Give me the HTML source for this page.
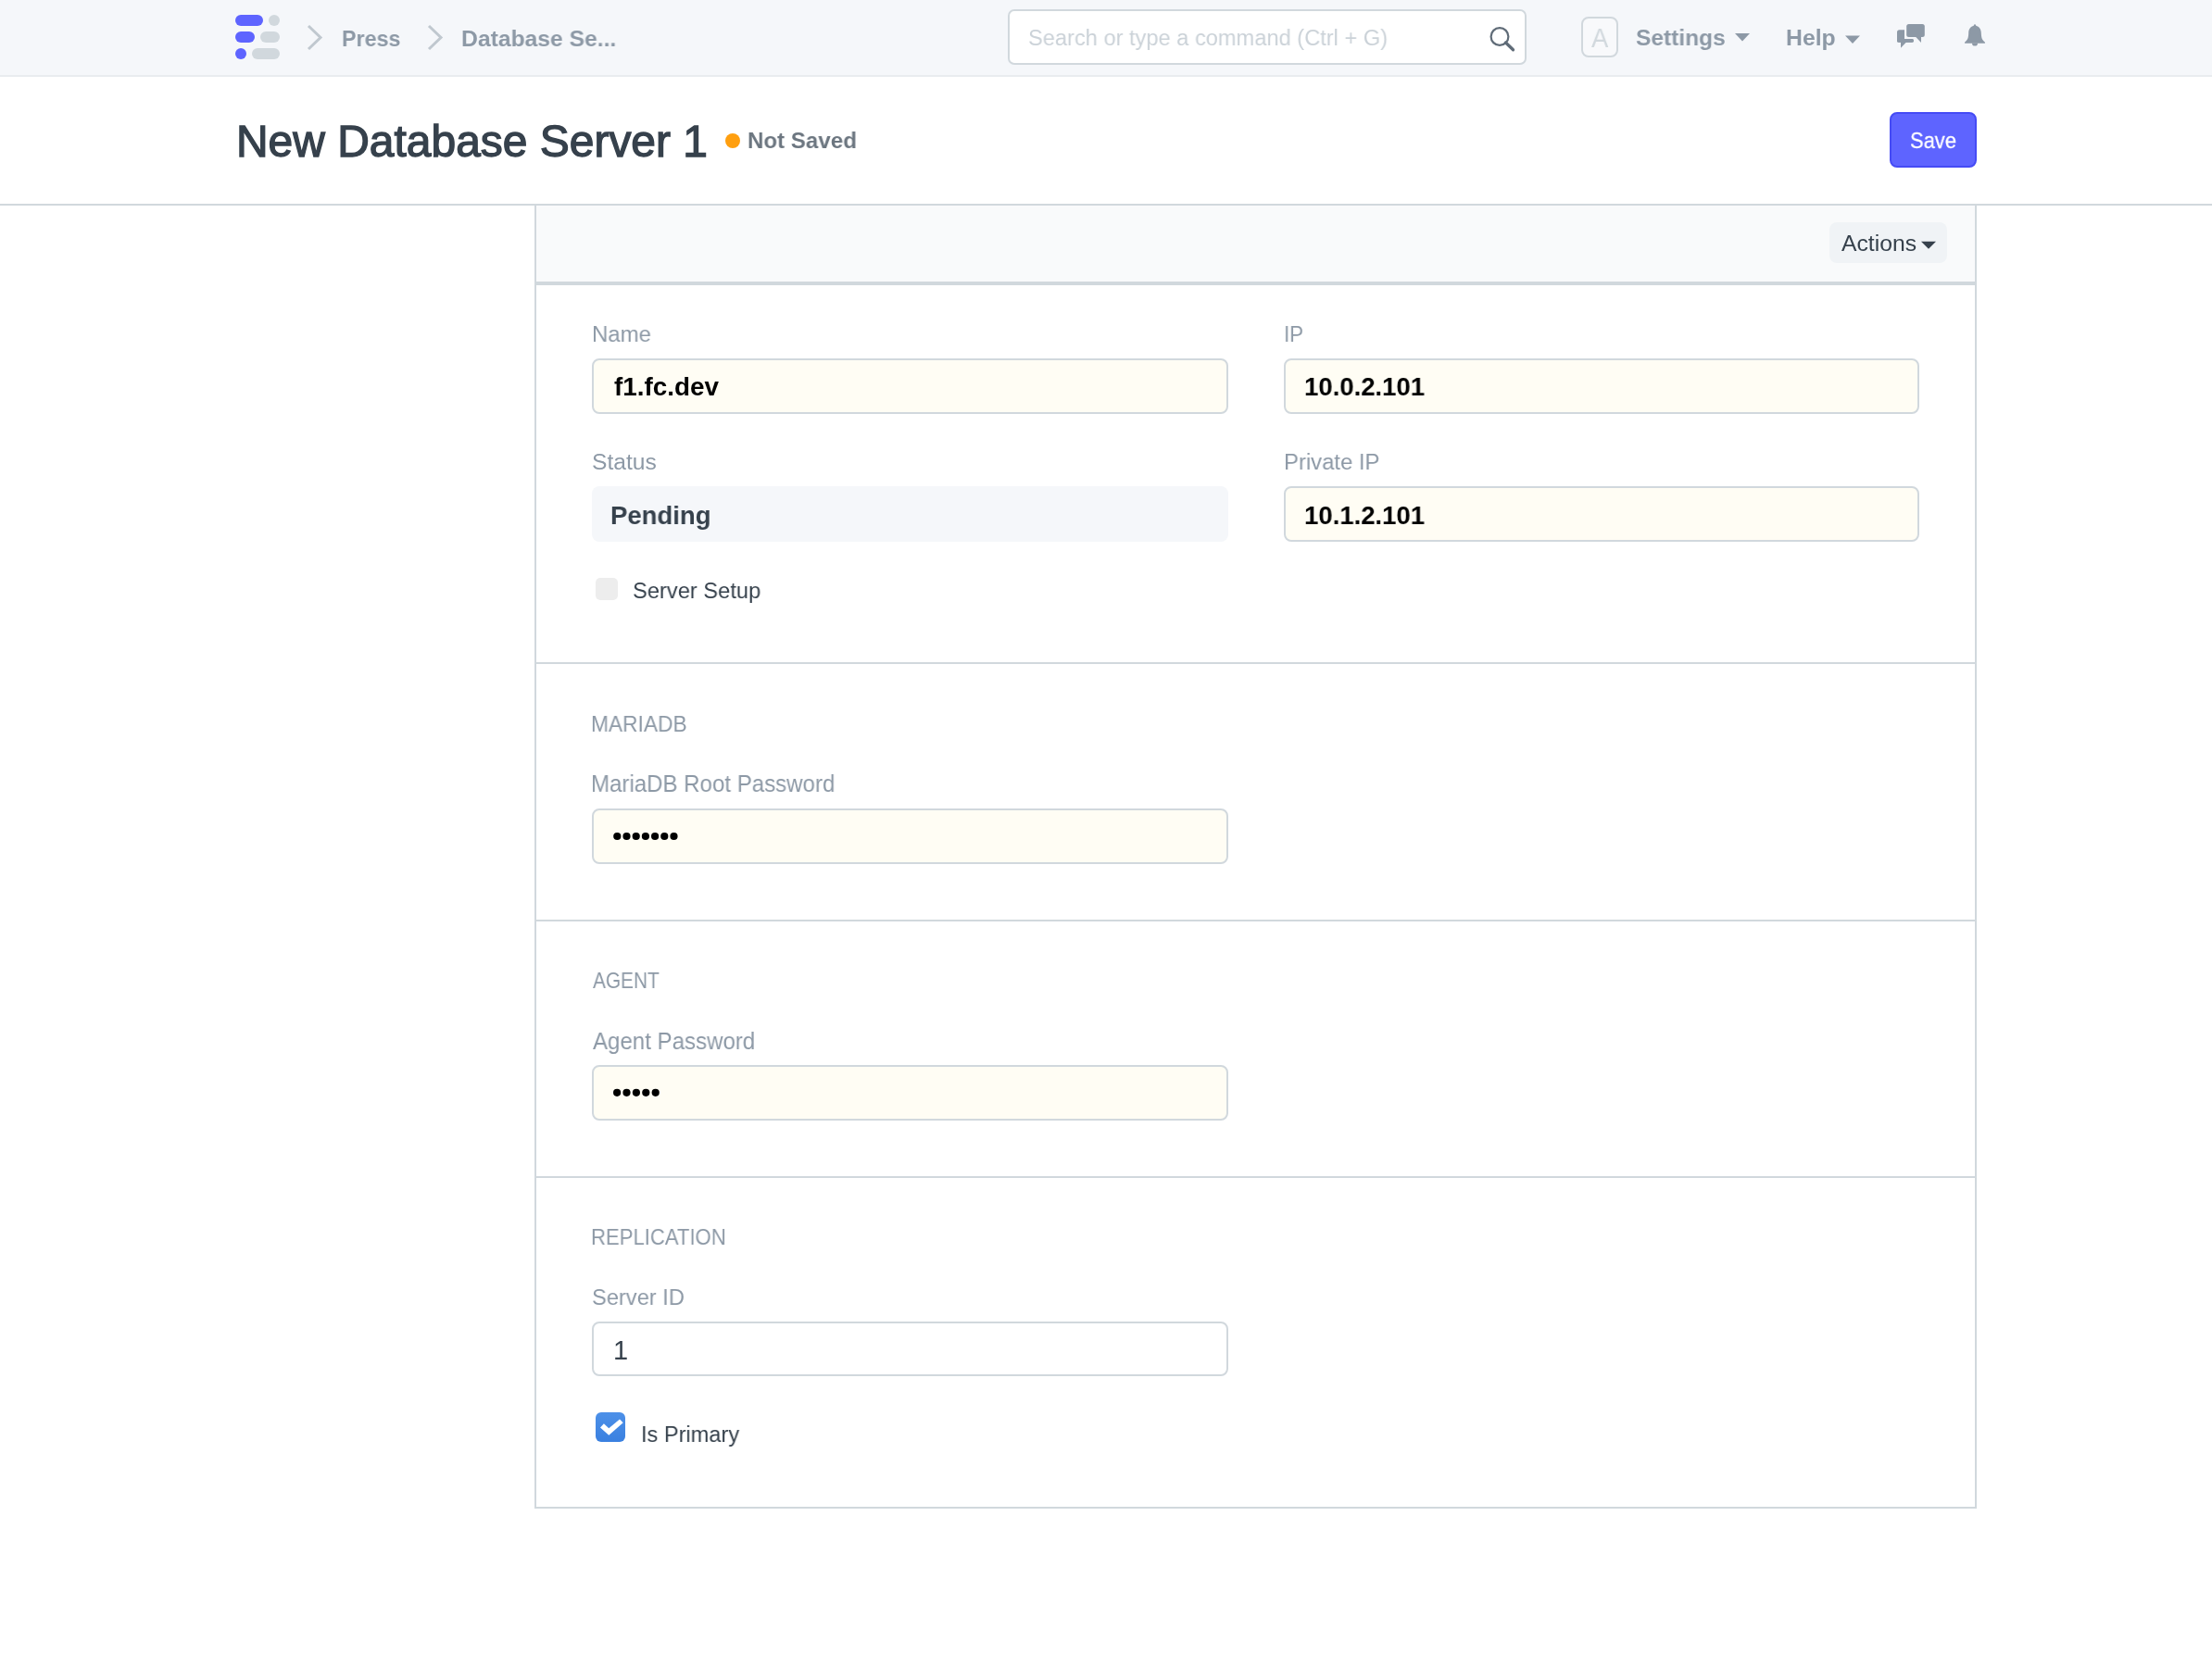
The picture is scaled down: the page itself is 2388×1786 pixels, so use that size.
<!DOCTYPE html>
<html><head><meta charset="utf-8"><title>New Database Server 1</title>
<style>
html,body{margin:0;padding:0;}
body{width:2388px;height:1786px;background:#ffffff;overflow:hidden;position:relative;font-family:'Liberation Sans', sans-serif;}
.a{position:absolute;box-sizing:border-box;}
.t{position:absolute;white-space:nowrap;transform-origin:0 0;font-family:'Liberation Sans', sans-serif;will-change:transform;}
svg{position:absolute;left:0;top:0;overflow:visible;}
</style></head>
<body>
<div class="a" style="left:0px;top:0px;width:2388px;height:81px;background:#f5f7fa;"></div>
<div class="a" style="left:0px;top:81px;width:2388px;height:2px;background:#e9ecef;"></div>
<div class="a" style="left:254px;top:16px;width:30px;height:12px;background:#5e64ff;border-radius:6px;"></div>
<div class="a" style="left:254px;top:34px;width:21px;height:12px;background:#5e64ff;border-radius:6px;"></div>
<div class="a" style="left:254px;top:52px;width:12px;height:12px;background:#5e64ff;border-radius:6px;"></div>
<div class="a" style="left:290px;top:16px;width:12px;height:12px;background:#d1d8dd;border-radius:6px;"></div>
<div class="a" style="left:281px;top:34px;width:21px;height:12px;background:#d1d8dd;border-radius:6px;"></div>
<div class="a" style="left:272px;top:52px;width:30px;height:12px;background:#d1d8dd;border-radius:6px;"></div>
<div class="a" style="left:1088px;top:10px;width:560px;height:60px;background:#ffffff;border:2px solid #d1d8dd;border-radius:7px;"></div>
<div class="a" style="left:1707px;top:18px;width:40px;height:44px;background:#f8f9fb;border:2px solid #d1d8dd;border-radius:8px;"></div>
<div class="a" style="left:0px;top:220px;width:2388px;height:2px;background:#d1d8dd;"></div>
<div class="a" style="left:2040px;top:121px;width:94px;height:60px;background:#5e64ff;border:2px solid #454bf5;border-radius:8px;"></div>
<div class="a" style="left:577px;top:222px;width:1557px;height:1407px;border:2px solid #d1d8dd;border-top:none;background:#ffffff;"></div>
<div class="a" style="left:579px;top:222px;width:1553px;height:82px;background:#f9fafb;"></div>
<div class="a" style="left:579px;top:304px;width:1553px;height:4px;background:#d1d8dd;"></div>
<div class="a" style="left:1975px;top:240px;width:127px;height:44px;background:#f0f3f6;border-radius:8px;"></div>
<div class="a" style="left:639px;top:387px;width:687px;height:60px;background:#fffdf4;border-radius:8px;border:2px solid #d1d8dd;"></div>
<div class="a" style="left:1386px;top:387px;width:686px;height:60px;background:#fffdf4;border-radius:8px;border:2px solid #d1d8dd;"></div>
<div class="a" style="left:639px;top:525px;width:687px;height:60px;background:#f5f7fa;border-radius:8px;"></div>
<div class="a" style="left:1386px;top:525px;width:686px;height:60px;background:#fffdf4;border-radius:8px;border:2px solid #d1d8dd;"></div>
<div class="a" style="left:639px;top:873px;width:687px;height:60px;background:#fffdf4;border-radius:8px;border:2px solid #d1d8dd;"></div>
<div class="a" style="left:639px;top:1150px;width:687px;height:60px;background:#fffdf4;border-radius:8px;border:2px solid #d1d8dd;"></div>
<div class="a" style="left:639px;top:1427px;width:687px;height:59px;background:#ffffff;border-radius:8px;border:2px solid #d1d8dd;"></div>
<div class="a" style="left:643px;top:624px;width:24px;height:24px;background:#ededed;border-radius:5px;"></div>
<div class="a" style="left:643px;top:1525px;width:32px;height:32px;background:linear-gradient(#4d90e8,#3a80e0);border-radius:6px;"></div>
<div class="a" style="left:579px;top:715px;width:1553px;height:2px;background:#d1d8dd;"></div>
<div class="a" style="left:579px;top:993px;width:1553px;height:2px;background:#d1d8dd;"></div>
<div class="a" style="left:579px;top:1270px;width:1553px;height:2px;background:#d1d8dd;"></div>
<svg width="2388" height="1786" viewBox="0 0 2388 1786"><polyline points="333,28 346,40.5 333,53" fill="none" stroke="#c0c8cf" stroke-width="3"/><polyline points="463,28 476,40.5 463,53" fill="none" stroke="#c0c8cf" stroke-width="3"/><circle cx="1619" cy="39.5" r="9.4" fill="none" stroke="#5f6b77" stroke-width="2.2"/><line x1="1625.5" y1="46" x2="1633.5" y2="53.8" stroke="#5f6b77" stroke-width="3.3" stroke-linecap="round"/><polygon points="1873,36 1889,36 1881,44.5" fill="#8d99a6"/><polygon points="1992,38.6 2008,38.6 2000,47" fill="#8d99a6"/><polygon points="2074,260.8 2090,260.8 2082,268.8" fill="#36414c"/><rect x="2058.2" y="26" width="19.6" height="14" rx="2.5" fill="#8d99a6"/><polygon points="2067.8,39.5 2074,39.5 2074,46" fill="#8d99a6"/><path d="M2050.5,32.2 H2056 V42.1 H2063.5 A2.4,2.4 0 0 1 2065.9,44.5 V43.4 A2.4,2.4 0 0 1 2063.5,45.8 H2050.5 A2.5,2.5 0 0 1 2048,43.3 V34.7 A2.5,2.5 0 0 1 2050.5,32.2 Z" fill="#8d99a6"/><rect x="2048" y="42.1" width="17.9" height="3.7" rx="1.5" fill="#8d99a6"/><polygon points="2052,45 2052,51.8 2058.5,45" fill="#8d99a6"/><path d="M2132,26.2 C2131,26.2 2130.8,27 2130.8,27.8 C2127.3,28.6 2125.3,31.5 2125.2,35.5 C2125,40.5 2124.5,43 2121.2,45.5 C2120.6,46 2121,46.8 2121.8,46.8 H2142.2 C2143,46.8 2143.4,46 2142.8,45.5 C2139.5,43 2139,40.5 2138.8,35.5 C2138.7,31.5 2136.7,28.6 2133.2,27.8 C2133.2,27 2133,26.2 2132,26.2 Z" fill="#8d99a6"/><path d="M2129,46.4 A3,3.2 0 0 0 2135,46.4 Z" fill="#8d99a6"/><circle cx="791" cy="152" r="8" fill="#ff9f0f"/><circle cx="666.3" cy="903" r="4.1" fill="#000"/><circle cx="676.5" cy="903" r="4.1" fill="#000"/><circle cx="686.7" cy="903" r="4.1" fill="#000"/><circle cx="696.9" cy="903" r="4.1" fill="#000"/><circle cx="707.1" cy="903" r="4.1" fill="#000"/><circle cx="717.3" cy="903" r="4.1" fill="#000"/><circle cx="727.5" cy="903" r="4.1" fill="#000"/><circle cx="666.1" cy="1179.8" r="4.1" fill="#000"/><circle cx="676.5" cy="1179.8" r="4.1" fill="#000"/><circle cx="686.9" cy="1179.8" r="4.1" fill="#000"/><circle cx="697.3" cy="1179.8" r="4.1" fill="#000"/><circle cx="707.7" cy="1179.8" r="4.1" fill="#000"/><polygon points="648,1541.4 657.3,1549.7 672.7,1536.2 669,1532.5 657.3,1542.2 651.9,1537.3" fill="#ffffff"/></svg>
<div class="t" style="left:368.62px;top:29.93px;font-size:24.78px;line-height:24.78px;font-weight:700;color:#8d99a6;transform:scaleX(0.9385);">Press</div>
<div class="t" style="left:498.01px;top:29.93px;font-size:24.78px;line-height:24.78px;font-weight:700;color:#8d99a6;transform:scaleX(0.9963);">Database Se...</div>
<div class="t" style="left:1109.73px;top:29.00px;font-size:24.35px;line-height:24.35px;font-weight:400;color:#cbd2d8;transform:scaleX(0.9706);">Search or type a command (Ctrl + G)</div>
<div class="t" style="left:1718.00px;top:27.36px;font-size:28.99px;line-height:28.99px;font-weight:400;color:#d1d8dd;transform:scaleX(0.9474);">A</div>
<div class="t" style="left:1766.01px;top:28.93px;font-size:24.78px;line-height:24.78px;font-weight:700;color:#8d99a6;transform:scaleX(0.9896);">Settings</div>
<div class="t" style="left:1928.00px;top:28.93px;font-size:24.78px;line-height:24.78px;font-weight:700;color:#8d99a6;">Help</div>
<div class="t" style="left:254.96px;top:129.07px;font-size:47.39px;line-height:47.39px;font-weight:400;color:#36414c;transform:scaleX(1.0120);-webkit-text-stroke:1.3px #36414c;">New Database Server 1</div>
<div class="t" style="left:806.84px;top:139.86px;font-size:24.64px;line-height:24.64px;font-weight:700;color:#6c7680;transform:scaleX(0.9786);">Not Saved</div>
<div class="t" style="left:2062.09px;top:140.28px;font-size:24.20px;line-height:24.20px;font-weight:400;color:#ffffff;transform:scaleX(0.9057);-webkit-text-stroke:0.3px #ffffff;">Save</div>
<div class="t" style="left:1987.50px;top:250.86px;font-size:24.64px;line-height:24.64px;font-weight:400;color:#36414c;transform:scaleX(1.0038);">Actions</div>
<div class="t" style="left:638.95px;top:349.06px;font-size:24.64px;line-height:24.64px;font-weight:400;color:#8d99a6;transform:scaleX(0.9730);">Name</div>
<div class="t" style="left:1385.98px;top:349.06px;font-size:24.64px;line-height:24.64px;font-weight:400;color:#8d99a6;transform:scaleX(0.9100);">IP</div>
<div class="t" style="left:662.80px;top:404.05px;font-size:27.83px;line-height:27.83px;font-weight:700;color:#000000;">f1.fc.dev</div>
<div class="t" style="left:1408.02px;top:404.35px;font-size:27.83px;line-height:27.83px;font-weight:700;color:#000000;transform:scaleX(0.9891);">10.0.2.101</div>
<div class="t" style="left:639.00px;top:487.06px;font-size:24.64px;line-height:24.64px;font-weight:400;color:#8d99a6;">Status</div>
<div class="t" style="left:1385.86px;top:487.06px;font-size:24.64px;line-height:24.64px;font-weight:400;color:#8d99a6;transform:scaleX(0.9692);">Private IP</div>
<div class="t" style="left:659.22px;top:543.35px;font-size:27.83px;line-height:27.83px;font-weight:700;color:#36414c;transform:scaleX(0.9887);">Pending</div>
<div class="t" style="left:1408.02px;top:543.35px;font-size:27.83px;line-height:27.83px;font-weight:700;color:#000000;transform:scaleX(0.9891);">10.1.2.101</div>
<div class="t" style="left:683.44px;top:626.06px;font-size:24.64px;line-height:24.64px;font-weight:400;color:#36414c;transform:scaleX(0.9620);">Server Setup</div>
<div class="t" style="left:638.44px;top:771.29px;font-size:23.19px;line-height:23.19px;font-weight:400;color:#8d99a6;transform:scaleX(0.9806);">MARIADB</div>
<div class="t" style="left:638.47px;top:833.81px;font-size:24.93px;line-height:24.93px;font-weight:400;color:#8d99a6;transform:scaleX(0.9651);">MariaDB Root Password</div>
<div class="t" style="left:639.80px;top:1048.29px;font-size:23.19px;line-height:23.19px;font-weight:400;color:#8d99a6;transform:scaleX(0.8975);">AGENT</div>
<div class="t" style="left:639.80px;top:1112.01px;font-size:24.93px;line-height:24.93px;font-weight:400;color:#8d99a6;transform:scaleX(0.9656);">Agent Password</div>
<div class="t" style="left:638.09px;top:1325.29px;font-size:23.19px;line-height:23.19px;font-weight:400;color:#8d99a6;transform:scaleX(0.9530);">REPLICATION</div>
<div class="t" style="left:638.84px;top:1389.06px;font-size:24.64px;line-height:24.64px;font-weight:400;color:#8d99a6;transform:scaleX(0.9608);">Server ID</div>
<div class="t" style="left:661.50px;top:1444.06px;font-size:28.99px;line-height:28.99px;font-weight:400;color:#36414c;">1</div>
<div class="t" style="left:691.68px;top:1537.06px;font-size:24.64px;line-height:24.64px;font-weight:400;color:#36414c;transform:scaleX(0.9578);">Is Primary</div>
</body></html>
